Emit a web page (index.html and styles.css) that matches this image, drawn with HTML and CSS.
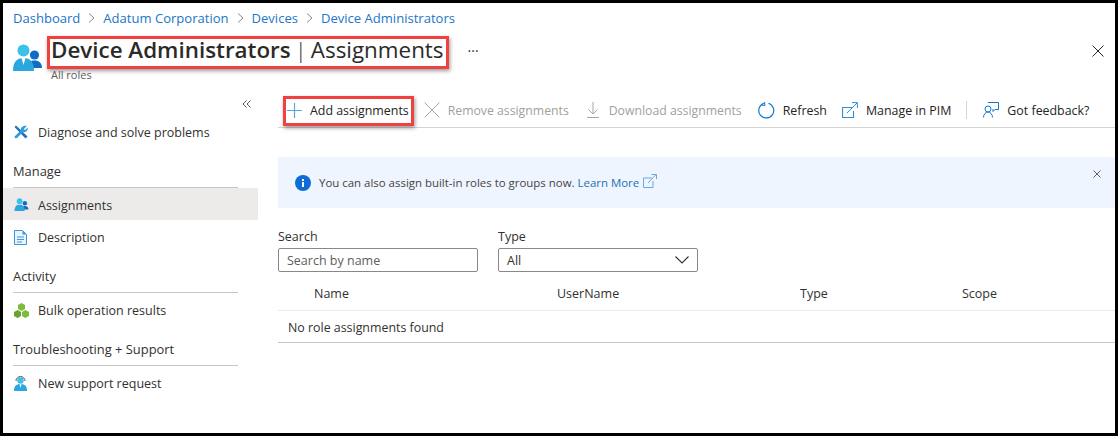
FILE: index.html
```html
<!DOCTYPE html>
<html>
<head>
  <title>Device Administrators | Assignments</title>
  <meta charset="utf-8">
  <link rel="stylesheet" href="styles.css">
</head>
<body>
<div class="frame">
  <nav class="crumbs">
    <a>Dashboard</a>
    <svg class="sep" width="7" height="10" viewBox="0 0 7 10"><path d="M1 .5 6 5 1 9.5" fill="none" stroke="#8a8886"/></svg>
    <a>Adatum Corporation</a>
    <svg class="sep" width="7" height="10" viewBox="0 0 7 10"><path d="M1 .5 6 5 1 9.5" fill="none" stroke="#8a8886"/></svg>
    <a>Devices</a>
    <svg class="sep" width="7" height="10" viewBox="0 0 7 10"><path d="M1 .5 6 5 1 9.5" fill="none" stroke="#8a8886"/></svg>
    <a>Device Administrators</a>
  </nav>

  <header class="head">
    <svg class="head-icon" width="29" height="27" viewBox="0 0 29 27">
      <circle cx="21.5" cy="11" r="4.6" fill="#0f6cc4"/>
      <path d="M14 24c0-5 3-7.500 7.500-7.500S29 19 29 24z" fill="#0f6cc4"/>
      <circle cx="10.500" cy="6.500" r="6" fill="#3cc0ec"/>
      <path d="M0 27c0-9 3.500-13 10.500-13S21 18 21 27z" fill="#2aa7dc"/>
      <path d="M8.500 14h4l-2 7z" fill="#fff"/>
    </svg>
    <div class="head-text">
      <h1><b>Device Administrators</b><span class="bar">|</span>Assignments</h1>
      <div class="sub">All roles</div>
    </div>
    <span class="dots">···</span>
    <svg class="close" width="12" height="12" viewBox="0 0 12 12"><path d="M.5.500l11 11M11.500.500l-11 11" stroke="#222" fill="none"/></svg>
  </header>

  <div class="main">
    <aside class="side">
      <div class="collapse">
        <svg width="9" height="8" viewBox="0 0 9 8"><path d="M4.500.500 1 4l3.500 3.500M8.500.500 5 4l3.500 3.500" fill="none" stroke="#605e5c"/></svg>
      </div>
      <a class="item">
        <svg class="ico" width="14" height="14" viewBox="0 0 14 14">
          <path d="M2 .5 13.500 11.500 11.500 13.500.5 2z" fill="#1f72b8"/>
          <path d="M12.800 1 10 3.700l.4 1 1 .4L13.700 2.500c.8 3-1.800 5.500-4.700 4.500L3.500 12.500C2.500 13.800.5 13.600.6 11.500L6.800 5.200C6 2.500 9.800-.2 12.800 1z" fill="#2f9fd8"/>
        </svg>
        Diagnose and solve problems
      </a>
      <h3>Manage</h3>
      <a class="item active">
        <svg class="ico" width="15" height="13" viewBox="0 0 29 27">
          <circle cx="21.500" cy="11" r="4.600" fill="#0f6cc4"/>
          <path d="M14 24c0-5 3-7.500 7.500-7.500S29 19 29 24z" fill="#0f6cc4"/>
          <circle cx="10.500" cy="6.500" r="6" fill="#3cc0ec"/>
          <path d="M0 27c0-9 3.500-13 10.500-13S21 18 21 27z" fill="#2aa7dc"/>
        </svg>
        Assignments
      </a>
      <a class="item">
        <svg class="ico" width="13" height="15" viewBox="0 0 13 15">
          <path d="M.5.500h8l4 4v10H.5z" fill="#eaf4fc" stroke="#3a96dd"/>
          <path d="M8.500.500v4h4z" fill="#3a96dd"/>
          <path d="M3 7h7M3 9.500h7M3 12h5" stroke="#3a96dd"/>
        </svg>
        Description
      </a>
      <h3>Activity</h3>
      <a class="item">
        <svg class="ico" width="15" height="15" viewBox="0 0 15 15">
          <path d="M7.500 0 11 2v4L7.500 8 4 6V2z" fill="#7fba3a"/>
          <path d="M3.700 7 7 9v4l-3.300 2L0 13V9z" fill="#68a32e"/>
          <path d="M11.300 7 15 9v4l-3.700 2L8 13V9z" fill="#7fba3a"/>
        </svg>
        Bulk operation results
      </a>
      <h3>Troubleshooting + Support</h3>
      <a class="item">
        <svg class="ico" width="13" height="15" viewBox="0 0 13 15">
          <circle cx="6.500" cy="4.500" r="3.200" fill="#3cc0ec"/>
          <path d="M2 5a4.500 4.500 0 0 1 9 0" fill="none" stroke="#555"/>
          <path d="M0 15c0-5 2-7 6.500-7S13 10 13 15z" fill="#2aa7dc"/>
          <path d="M5.500 8h2l-1 4z" fill="#fff"/>
        </svg>
        New support request
      </a>
    </aside>

    <section class="content">
      <div class="toolbar">
        <a class="tool">
          <svg width="15" height="15" viewBox="0 0 15 15"><path d="M7.500 0v15M0 7.500h15" stroke="#5ba4dc" stroke-width="1.200"/></svg>
          Add assignments
        </a>
        <a class="tool off">
          <svg width="16" height="16" viewBox="0 0 16 16"><path d="M.5.500l15 15M15.500.500l-15 15" stroke="#a6a6a6"/></svg>
          Remove assignments
        </a>
        <a class="tool off dl">
          <svg width="12" height="16" viewBox="0 0 12 16"><path d="M6 0v12M1.500 7.500 6 12l4.500-4.500M0 15.500h12" fill="none" stroke="#a6a6a6"/></svg>
          Download assignments
        </a>
        <a class="tool">
          <svg width="17" height="17" viewBox="0 0 17 17"><path d="M10.500 1.300a7.500 7.500 0 1 1-4.500 0" fill="none" stroke="#0f78d4" stroke-width="1.200"/><path d="M6.500 0 7 3.500 3.500 3" fill="none" stroke="#0f78d4"/></svg>
          Refresh
        </a>
        <a class="tool">
          <svg width="16" height="16" viewBox="0 0 16 16"><path d="M11 5.500H.5v10h11V9" fill="none" stroke="#2f8fd8" stroke-width="1.200"/><path d="M5 11 15 1M10 .6h5.400V6" fill="none" stroke="#2f8fd8"/></svg>
          Manage in PIM
        </a>
        <span class="tool-sep"></span>
        <a class="tool">
          <svg width="16" height="16" viewBox="0 0 16 16"><path d="M5 1V.5h10.500v7H12L10 9.500V7" fill="none" stroke="#0f78d4"/><circle cx="5" cy="7" r="3" fill="#fff" stroke="#0f78d4"/><path d="M.5 15.500c0-3 2-5.500 4.500-5.500s4.500 2.500 4.500 5.500" fill="none" stroke="#0f78d4"/></svg>
          Got feedback?
        </a>
      </div>

      <div class="banner">
        <svg width="16" height="16" viewBox="0 0 16 16"><circle cx="8" cy="8" r="8" fill="#0f6cd4"/><rect x="7" y="7" width="2" height="5" fill="#fff"/><rect x="7" y="4" width="2" height="2" fill="#fff"/></svg>
        <span class="banner-text">You can also assign built-in roles to groups now. <a>Learn More</a></span>
        <svg class="ext" width="14" height="14" viewBox="0 0 14 14"><path d="M9 4H.5v9.500h9.500V7" fill="none" stroke="#6aa8e0"/><path d="M5 9l8-8.500M8.500.5h5V5" fill="none" stroke="#6aa8e0"/></svg>
        <svg class="banner-x" width="8" height="8" viewBox="0 0 8 8"><path d="M.5.500l7 7M7.500.500l-7 7" stroke="#605e5c"/></svg>
      </div>

      <div class="filters">
        <label class="field">
          <span>Search</span>
          <div class="box ph">Search by name</div>
        </label>
        <label class="field">
          <span>Type</span>
          <div class="box">All
            <svg width="14" height="8" viewBox="0 0 14 8"><path d="M.5.500 7 7l6.500-6.500" fill="none" stroke="#323130" stroke-width="1.100"/></svg>
          </div>
        </label>
      </div>

      <div class="thead">
        <span class="col-name">Name</span>
        <span class="col-user">UserName</span>
        <span class="col-type">Type</span>
        <span>Scope</span>
      </div>
      <div class="empty">No role assignments found</div>
    </section>
  </div>

  <div class="mark mark-title"></div>
  <div class="mark mark-add"></div>
</div>
</body>
</html>
```

FILE: styles.css
```css
html, body{
  margin: 0; padding: 0;
}
body{
  color: #323130;
  background: #fff;
  font-family: "Open Sans", "Noto Sans", sans-serif;
  font-size: 12.5px;
}
a{
  color: inherit;
  text-decoration: none;
}
.frame{
  position: relative;
  box-sizing: border-box;
  width: 1118px;
  height: 436px;
  border: 3px solid #000;
  overflow: hidden;
  background: #fff;
}

/* breadcrumb + title */
.crumbs{
  display: flex;
  align-items: center;
  gap: 8px;
  height: 30px;
  padding-left: 10px;
  color: #2176c7;
  font-size: 13.05px;
}
.head{
  display: flex;
  height: 50px;
  padding-left: 10px;
  position: relative;
}
.head-icon{
  margin-top: 11px;
}
.head-text{
  margin-left: 9px;
}
h1{
  margin: 0;
  height: 33px;
  font-size: 22.4px;
  line-height: 33px;
  font-weight: 400;
  color: #2b2a29;
  white-space: nowrap;
}
h1 b{
  font-weight: 600;
}
.bar{
  margin: 0 4px;
  font-weight: 300;
}
.sub{
  margin-top: 3px;
  font-size: 11px;
  line-height: 12px;
  color: #605e5c;
}
.dots{
  margin: 7px 0 0 24px;
  font-size: 14px;
  font-weight: 400;
  line-height: 22px;
}
.close{
  position: absolute;
  right: 11px;
  top: 12px;
}

/* left menu */
.main{
  display: flex;
}
.side{
  width: 255px;
  flex: none;
  padding-top: 12px;
}
.collapse{
  box-sizing: border-box;
  height: 20px;
  padding: 5px 0 0 239px;
}
.collapse svg{
  display: block;
}
.item{
  display: flex;
  align-items: center;
  box-sizing: border-box;
  height: 32px;
  padding: 2px 0 0 35px;
  position: relative;
}
.item.active{
  background: #edebe9;
}
.ico{
  position: absolute;
  left: 11px;
  top: 10px;
}
h3{
  margin: 10px 20px 0 10px;
  height: 30px;
  line-height: 28px;
  font-size: 12.9px;
  font-weight: 500;
  border-bottom: 1px solid #c8c6c4;
}

/* right side */
.content{
  flex: 1;
  margin-left: 20px;
}
.toolbar{
  display: flex;
  align-items: center;
  height: 34px;
  padding-top: 10px;
  border-bottom: 1px solid #d5d4d3;
}
.tool{
  display: flex;
  align-items: center;
  gap: 8px;
  margin-right: 15px;
  white-space: nowrap;
  color: #252423;
  font-size: 12.4px;
}
.tool:first-child{
  margin-left: 9px;
}
.tool.off{
  color: #a19f9d;
  font-size: 12.25px;
  margin-right: 18px;
}
.tool.dl{
  gap: 10px;
  margin-right: 16px;
}
.tool-sep{
  width: 1px;
  height: 18px;
  background: #d5d4d3;
  margin-right: 16px;
}
.banner{
  display: flex;
  align-items: center;
  position: relative;
  height: 51px;
  margin-top: 29px;
  padding-left: 17px;
  background: #eef5fe;
  font-size: 11.45px;
  color: #444;
}
.banner-text{
  margin: 0 0 0 8px;
}
.banner-text a{
  color: #1f6fb5;
}
.ext{
  margin: -4px 0 0 4px;
}
.banner-x{
  position: absolute;
  right: 14px;
  top: 13px;
}
.filters{
  display: flex;
  gap: 20px;
  margin-top: 20px;
}
.field{
  display: block;
  width: 200px;
}
.field span{
  display: block;
  height: 20px;
  line-height: 18px;
}
.box{
  display: flex;
  align-items: center;
  justify-content: space-between;
  box-sizing: border-box;
  height: 24px;
  padding: 0 8px;
  border: 1px solid #8a8886;
  border-radius: 2px;
}
.ph{
  color: #605e5c;
}
.thead{
  display: flex;
  height: 39px;
  align-items: center;
  padding-top: 4px;
  box-sizing: border-box;
  border-bottom: 1px solid #edebe9;
  font-weight: 500;
}
.col-name{
  margin-left: 36px;
  width: 243px;
}
.col-user{
  width: 243px;
}
.col-type{
  width: 162px;
}
.empty{
  height: 31px;
  line-height: 34px;
  padding-left: 10px;
  font-size: 12.4px;
  border-bottom: 1px solid #c8c6c4;
}

/* red annotation boxes over the page */
.mark{
  position: absolute;
  box-sizing: border-box;
  border: 3px solid #f04040;
  box-shadow: 1px 2px 4px rgba(0,0,0,.4);
}
.mark-title{
  left: 44px;
  top: 33px;
  width: 402px;
  height: 33px;
}
.mark-add{
  left: 280px;
  top: 93px;
  width: 131px;
  height: 30px;
}
```
